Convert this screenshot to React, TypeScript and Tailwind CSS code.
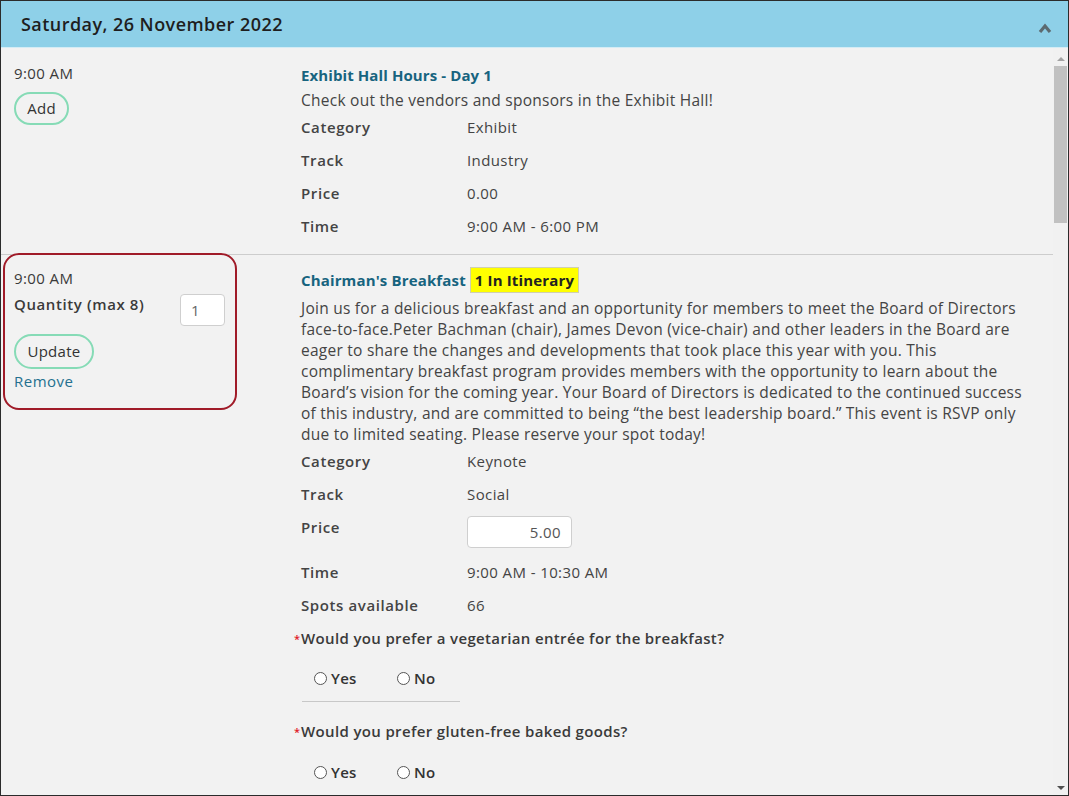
import React from 'react';

const font = "font-['Open_Sans',_'Liberation_Sans',_sans-serif]";

function DetailRow({ label, children, tall }: { label: string; children: React.ReactNode; tall?: boolean }) {
  return (
    <div className={`flex ${tall ? 'h-[45px] items-start' : 'h-[33px] items-center'}`}>
      <div className={`w-[166px] shrink-0 text-[15px] font-semibold tracking-[0.6px] text-[#444] ${tall ? 'leading-[33px]' : ''}`}>
        {label}
      </div>
      <div className="text-[15px] tracking-[0.4px] text-[#444]">{children}</div>
    </div>
  );
}

function Radio({ label }: { label: string }) {
  return (
    <label className="flex w-[83px] items-center gap-[4px]">
      <span className="h-[13px] w-[13px] rounded-full border border-[#555] bg-white" />
      <span className="text-[15px] font-semibold tracking-[0.3px] text-[#333]">{label}</span>
    </label>
  );
}

function Question({ text }: { text: string }) {
  return (
    <div className="flex h-[22px] items-center text-[15px] font-semibold tracking-[0.35px] text-[#3a3a3a]">
      <span className="-ml-[7px] mt-[3px] w-[7px] text-[11px] text-[#e0201f]">*</span>
      <span>{text}</span>
    </div>
  );
}

export default function App() {
  const description = [
    'Join us for a delicious breakfast and an opportunity for members to meet the Board of Directors',
    'face-to-face.Peter Bachman (chair), James Devon (vice-chair) and other leaders in the Board are',
    'eager to share the changes and developments that took place this year with you. This',
    'complimentary breakfast program provides members with the opportunity to learn about the',
    'Board\u2019s vision for the coming year. Your Board of Directors is dedicated to the continued success',
    'of this industry, and are committed to being \u201cthe best leadership board.\u201d This event is RSVP only',
    'due to limited seating. Please reserve your spot today!',
  ];

  return (
    <div className={`${font} flex h-[796px] w-[1069px] flex-col overflow-hidden border border-[#2b2b2b] bg-[#f2f2f2] text-[14px]`}>
      {/* Day header */}
      <div className="flex h-[47px] shrink-0 items-center justify-between border-b border-[#d4ecf5] bg-[#8ed0e8] pl-[20px] pr-[16px]">
        <h2 className="text-[18px] font-semibold tracking-[0.45px] text-[#1e1e1e]">Saturday, 26 November 2022</h2>
        <svg width="14" height="12" viewBox="0 0 14 12" className="mt-[8px]">
          <polyline points="2,10 7,4 12,10" fill="none" stroke="#5c6a70" strokeWidth="3.2" />
        </svg>
      </div>

      <div className="flex min-h-0 flex-1">
        <div className="min-w-0 flex-1">
          {/* Exhibit Hall */}
          <div className="flex border-b border-[#cdcdcd] pb-[11px] pl-[13px]">
            <div className="w-[287px] shrink-0 pt-[16px]">
              <div className="text-[15px] leading-[18px] tracking-[0.4px] text-[#3a3a3a]">9:00 AM</div>
              <button className="mt-[10px] flex h-[33px] w-[55px] items-center justify-center rounded-full border-2 border-[#86dbb6] text-[15px] font-medium tracking-[0.3px] text-[#333]">
                Add
              </button>
            </div>
            <div className="flex-1 pt-[16px]">
              <div className="mb-[4px] text-[15px] leading-[22px] font-bold tracking-[0.1px] text-[#17647f]">Exhibit Hall Hours - Day 1</div>
              <p className="text-[15.5px] leading-[21px] tracking-[0.25px] text-[#444]">Check out the vendors and sponsors in the Exhibit Hall!</p>
              <DetailRow label="Category">Exhibit</DetailRow>
              <DetailRow label="Track">Industry</DetailRow>
              <DetailRow label="Price">0.00</DetailRow>
              <DetailRow label="Time">9:00 AM - 6:00 PM</DetailRow>
            </div>
          </div>

          {/* Chairman's Breakfast */}
          <div className="flex pl-[13px]">
            <div className="w-[287px] shrink-0">
              <div className="-ml-[11px] -mt-[2px] w-[234px] rounded-[16px] border-2 border-[#a01b28] pb-[18px] pl-[9px] pr-[10px] pt-[14px]">
                <div className="text-[15px] leading-[18px] tracking-[0.4px] text-[#3a3a3a]">9:00 AM</div>
                <div className="mt-[7px] flex items-start justify-between">
                  <span className="pt-[1px] text-[15px] leading-[18px] font-semibold tracking-[0.6px] text-[#3a3a3a]">Quantity (max 8)</span>
                  <div className="flex h-[32px] w-[45px] items-center rounded-[4px] border border-[#cfcfcf] bg-white pl-[10px] text-[15px] text-[#666]">1</div>
                </div>
                <button className="mt-[8px] flex h-[35px] w-[80px] items-center justify-center rounded-full border-2 border-[#86dbb6] text-[15px] font-medium tracking-[0.3px] text-[#333]">
                  Update
                </button>
                <a className="mt-[3px] block text-[15px] leading-[18px] tracking-[0.5px] text-[#24708f]">Remove</a>
              </div>
            </div>
            <div className="flex-1 pt-[12px]">
              <div className="mb-[5px] flex h-[26px] items-center text-[15px] font-bold tracking-[0.15px] text-[#17647f]">
                <span>Chairman's Breakfast</span>
                <span className="ml-[4px] flex h-[26px] items-center border border-[#cfcfb0] bg-[#ffff00] px-[4px] text-[#222]">1 In Itinerary</span>
              </div>
              <p className="whitespace-nowrap text-[15.5px] leading-[21px] tracking-[0.25px] text-[#444]">
                {description.map((line, i) => (
                  <span key={i} className="block">{line}</span>
                ))}
              </p>
              <DetailRow label="Category">Keynote</DetailRow>
              <DetailRow label="Track">Social</DetailRow>
              <DetailRow label="Price" tall>
                <div className="mt-[5px] flex h-[32px] w-[105px] items-center justify-end rounded-[4px] border border-[#cfcfcf] bg-white pr-[10px] text-[#555]">5.00</div>
              </DetailRow>
              <DetailRow label="Time">9:00 AM - 10:30 AM</DetailRow>
              <DetailRow label="Spots available">66</DetailRow>

              <div className="mt-[5px]">
                <Question text="Would you prefer a vegetarian entrée for the breakfast?" />
              </div>
              <div className="mt-[18px] flex h-[22px] items-center pl-[13px]">
                <Radio label="Yes" />
                <Radio label="No" />
              </div>
              <div className="ml-[1px] mt-[12px] h-px w-[158px] bg-[#c8c8c8]" />
              <div className="mt-[18px]">
                <Question text="Would you prefer gluten-free baked goods?" />
              </div>
              <div className="mt-[19px] flex h-[22px] items-center pl-[13px]">
                <Radio label="Yes" />
                <Radio label="No" />
              </div>
            </div>
          </div>
        </div>

        {/* Scrollbar */}
        <div className="flex w-[15px] shrink-0 flex-col items-center bg-[#f1f1f1]">
          <svg width="8" height="5" viewBox="0 0 8 5" className="mt-[8px]">
            <polygon points="0,5 4,1 8,5" fill="#a3a3a3" />
          </svg>
          <div className="mt-[5px] h-[157px] w-[13px] bg-[#c1c1c1]" />
          <div className="flex-1" />
          <svg width="8" height="5" viewBox="0 0 8 5" className="mb-[4px]">
            <polygon points="0,0 8,0 4,4" fill="#505050" />
          </svg>
        </div>
      </div>
    </div>
  );
}
